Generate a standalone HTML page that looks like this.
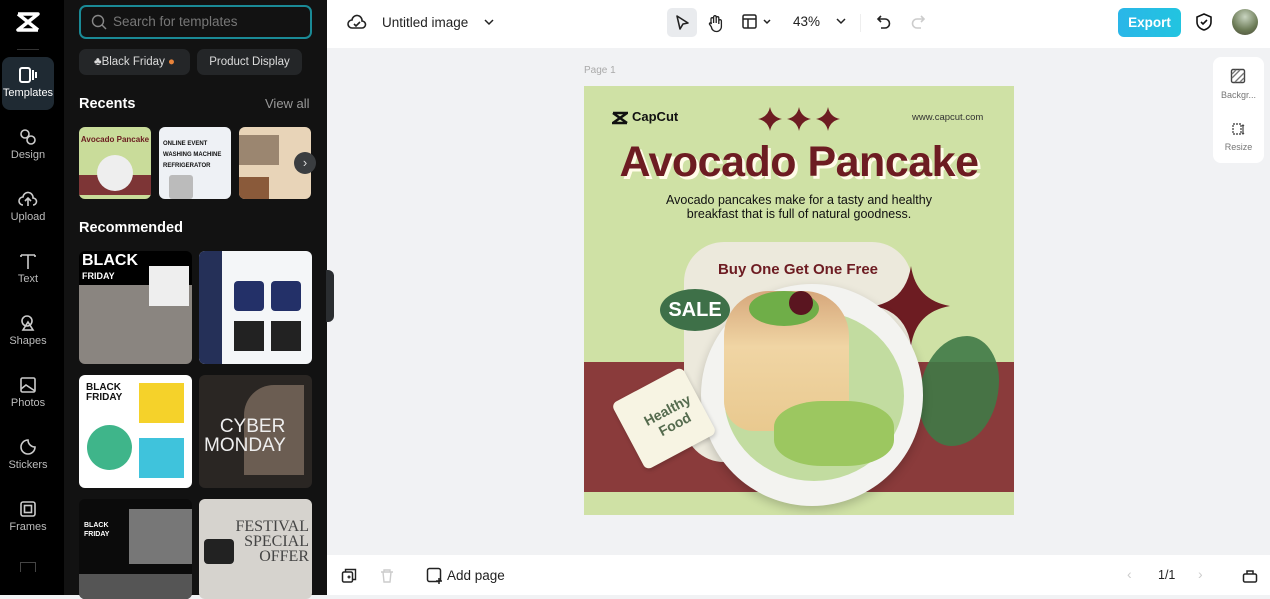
<!DOCTYPE html>
<html><head><meta charset="utf-8"><style>
*{box-sizing:border-box;margin:0;padding:0}
body{width:1270px;height:595px;overflow:hidden;font-family:"Liberation Sans",sans-serif;background:#f1f2f4;position:relative}
.abs{position:absolute}
#rail{left:0;top:0;width:64px;height:595px;background:#000}
.ri{position:absolute;left:0;width:56px;text-align:center;color:#bbb;font-size:11px}
.ri svg{display:block;margin:0 auto 3px}
#panel{left:64px;top:0;width:263px;height:595px;background:#121212}
.th{position:absolute;border-radius:6px;overflow:hidden}
#top{left:327px;top:0;width:943px;height:48px;background:#fff}
#bot{left:327px;top:555px;width:943px;height:40px;background:#fff}
</style></head><body>
<div id="rail" class="abs">
 <svg class="abs" style="left:16px;top:11px" width="24" height="22" viewBox="0 0 24 22"><path d="M2 3h20L2 19h20M2 3l20 16" stroke="#fff" stroke-width="3.5" fill="none" stroke-linejoin="round"/></svg>
 <div class="abs" style="left:17px;top:49px;width:22px;height:1px;background:#333"></div>
 <div class="abs" style="left:2px;top:57px;width:52px;height:53px;border-radius:8px;background:#1f2a33"></div>
 <div class="ri" style="top:66px;color:#fff"><svg width="20" height="18"><rect x="2" y="2" width="10" height="14" rx="2" stroke="#fff" stroke-width="2" fill="none"/><path d="M15 4v10M18 6v6" stroke="#fff" stroke-width="2"/></svg>Templates</div>
 <div class="ri" style="top:128px"><svg width="20" height="18"><circle cx="7" cy="6" r="4" stroke="#ccc" stroke-width="1.6" fill="none"/><circle cx="13" cy="12" r="4" stroke="#ccc" stroke-width="1.6" fill="none"/></svg>Design</div>
 <div class="ri" style="top:190px"><svg width="20" height="18"><path d="M5 15a4 4 0 0 1 0-8 5 5 0 0 1 10 1 3.5 3.5 0 0 1 0 7M10 16V9M7 11l3-3 3 3" stroke="#ccc" stroke-width="1.6" fill="none"/></svg>Upload</div>
 <div class="ri" style="top:252px"><svg width="20" height="18"><path d="M3 3h14M10 3v14M3 3v2M17 3v2" stroke="#ccc" stroke-width="1.6" fill="none"/></svg>Text</div>
 <div class="ri" style="top:314px"><svg width="20" height="18"><circle cx="9" cy="7" r="5" stroke="#ccc" stroke-width="1.6" fill="none"/><path d="M10 8l5 8H5z" stroke="#ccc" stroke-width="1.6" fill="none"/></svg>Shapes</div>
 <div class="ri" style="top:376px"><svg width="20" height="18"><rect x="3" y="2" width="14" height="14" rx="1.5" stroke="#ccc" stroke-width="1.6" fill="none"/><path d="M3 13l5-4 9 6" stroke="#ccc" stroke-width="1.6" fill="none"/></svg>Photos</div>
 <div class="ri" style="top:438px"><svg width="20" height="18"><path d="M10 2a7 7 0 1 0 7 7 7 7 0 0 1-7-7z" stroke="#ccc" stroke-width="1.6" fill="none"/></svg>Stickers</div>
 <div class="ri" style="top:500px"><svg width="20" height="18"><rect x="3" y="2" width="14" height="14" rx="2" stroke="#ccc" stroke-width="1.6" fill="none"/><rect x="6.5" y="5.5" width="7" height="7" stroke="#ccc" stroke-width="1.6" fill="none"/></svg>Frames</div>
 <div class="abs" style="left:20px;top:562px;width:16px;height:10px;border:1.5px solid #444;border-bottom:none"></div>
</div>
<div id="panel" class="abs">
 <div class="abs" style="left:15px;top:5px;width:233px;height:34px;border:2px solid #1a8a96;border-radius:7px"></div>
 <svg class="abs" style="left:27px;top:14px" width="16" height="16"><circle cx="7" cy="7" r="5.5" stroke="#888" stroke-width="1.4" fill="none"/><path d="M11 11l4 4" stroke="#888" stroke-width="1.4"/></svg>
 <div class="abs" style="left:49px;top:14px;color:#777;font-size:13.5px">Search for templates</div>
 <div class="abs" style="left:15px;top:49px;width:111px;height:26px;border-radius:7px;background:#242628;color:#ddd;font-size:11.5px;line-height:26px;text-align:center">♣Black Friday <span style="color:#e8833a">●</span></div>
 <div class="abs" style="left:133px;top:49px;width:105px;height:26px;border-radius:7px;background:#242628;color:#ddd;font-size:11.5px;line-height:26px;text-align:center">Product Display</div>
 <div class="abs" style="left:15px;top:96px;color:#fff;font-size:14.5px;font-weight:bold">Recents</div>
 <div class="abs" style="left:201px;top:96px;color:#999;font-size:13px">View all</div>
 <div class="th" style="left:15px;top:127px;width:72px;height:72px;background:#c9dc9a"><div style="position:absolute;top:48px;height:20px;width:100%;background:#7d3536"></div><div style="position:absolute;left:18px;top:28px;width:36px;height:36px;border-radius:50%;background:#eee"></div><div style="position:absolute;top:8px;width:100%;text-align:center;color:#6b1c20;font-size:8px;font-weight:bold">Avocado Pancake</div></div>
 <div class="th" style="left:95px;top:127px;width:72px;height:72px;background:#eef1f5"><div style="font-size:6px;font-weight:bold;color:#111;padding:12px 4px;line-height:11px">ONLINE EVENT<br>WASHING MACHINE<br>REFRIGERATOR</div><div style="position:absolute;left:10px;top:48px;width:24px;height:24px;background:#bbb;border-radius:3px"></div></div>
 <div class="th" style="left:175px;top:127px;width:72px;height:72px;background:#e8d4b8"><div style="position:absolute;left:0;top:8px;width:40px;height:30px;background:#9b8670"></div><div style="position:absolute;left:0;top:50px;width:30px;height:22px;background:#8a5a3a"></div></div>
 <div class="abs" style="left:230px;top:152px;width:22px;height:22px;border-radius:50%;background:#3a3d40;color:#ddd;font-size:13px;text-align:center;line-height:21px">›</div>
 <div class="abs" style="left:15px;top:220px;color:#fff;font-size:14.5px;font-weight:bold">Recommended</div>
 <div class="th" style="left:15px;top:251px;width:113px;height:113px;background:linear-gradient(#000 0 30%,#8a8580 30%)"><div style="color:#fff;font-weight:bold;font-size:16px;padding:3px 3px;line-height:14px">BLACK<br><span style="font-size:9px">FRIDAY</span></div><div style="position:absolute;left:70px;top:15px;width:40px;height:40px;background:#eee"></div></div>
 <div class="th" style="left:135px;top:251px;width:113px;height:113px;background:#f4f6f8"><div style="position:absolute;left:0;top:0;width:23px;height:113px;background:#253058"></div><div style="position:absolute;left:35px;top:30px;width:30px;height:30px;background:#233068;border-radius:4px"></div><div style="position:absolute;left:72px;top:30px;width:30px;height:30px;background:#233068;border-radius:4px"></div><div style="position:absolute;left:35px;top:70px;width:30px;height:30px;background:#222"></div><div style="position:absolute;left:72px;top:70px;width:30px;height:30px;background:#222"></div></div>
 <div class="th" style="left:15px;top:375px;width:113px;height:113px;background:#fff"><div style="font-size:10px;font-weight:bold;color:#111;padding:8px 7px;line-height:10px">BLACK<br>FRIDAY</div><div style="position:absolute;left:60px;top:8px;width:45px;height:40px;background:#f5d22a"></div><div style="position:absolute;left:8px;top:50px;width:45px;height:45px;border-radius:50%;background:#3fb58a"></div><div style="position:absolute;left:60px;top:63px;width:45px;height:40px;background:#3fc3dc"></div></div>
 <div class="th" style="left:135px;top:375px;width:113px;height:113px;background:#2a2623"><div style="position:absolute;left:45px;top:10px;width:60px;height:90px;background:#6b5d52;border-radius:30px 0 0 0"></div><div style="position:absolute;left:5px;top:42px;color:#eee;font-size:19px;line-height:19px">&nbsp;&nbsp;&nbsp;CYBER<br>MONDAY</div></div>
 <div class="th" style="left:15px;top:499px;width:113px;height:100px;background:#0b0b0b"><div style="position:absolute;left:50px;top:10px;width:63px;height:55px;background:#777"></div><div style="position:absolute;left:0;top:75px;width:113px;height:30px;background:#555"></div><div style="font-size:7px;font-weight:bold;color:#fff;padding:22px 5px;line-height:9px">BLACK<br>FRIDAY</div></div>
 <div class="th" style="left:135px;top:499px;width:113px;height:100px;background:#d6d3ce"><div style="position:absolute;left:35px;top:20px;color:#444;font-family:'Liberation Serif',serif;font-size:16px;line-height:15px;text-align:right;width:75px">FESTIVAL SPECIAL OFFER</div><div style="position:absolute;left:5px;top:40px;width:30px;height:25px;background:#222;border-radius:4px"></div></div>
</div>
<div class="abs" style="left:326px;top:270px;width:8px;height:52px;background:#2a2d30;border-radius:0 6px 6px 0"></div>
<div id="top" class="abs">
 <svg class="abs" style="left:20px;top:13px" width="20" height="18"><path d="M5 15a4 4 0 0 1 0-8 5 5 0 0 1 10 1 3.5 3.5 0 0 1 0 7z M7 11l2 2 4-4" stroke="#222" stroke-width="1.6" fill="none"/></svg>
 <div class="abs" style="left:55px;top:15px;font-size:13.5px;color:#222">Untitled image</div>
 <svg class="abs" style="left:156px;top:18px" width="12" height="8"><path d="M2 2l4 4 4-4" stroke="#222" stroke-width="1.5" fill="none"/></svg>
 <div class="abs" style="left:340px;top:8px;width:30px;height:29px;border-radius:5px;background:#e9ebee"></div>
 <svg class="abs" style="left:347px;top:14px" width="16" height="18"><path d="M3 2l11 7-5 1-3 5z" stroke="#222" stroke-width="1.6" fill="none" stroke-linejoin="round"/></svg>
 <svg class="abs" style="left:379px;top:13px" width="18" height="20"><path d="M5 11V6a1.3 1.3 0 0 1 2.6 0v4V4a1.3 1.3 0 0 1 2.6 0v6V5a1.3 1.3 0 0 1 2.6 0v6V8a1.3 1.3 0 0 1 2.6 0v5a5 5 0 0 1-10 1l-2-3a1.2 1.2 0 0 1 2-1z" stroke="#222" stroke-width="1.3" fill="none"/></svg>
 <svg class="abs" style="left:415px;top:14px" width="32" height="16"><rect x="1" y="1" width="13" height="13" rx="1.5" stroke="#222" stroke-width="1.5" fill="none"/><path d="M1 5h13M6 5v9M22 6l3 3 3-3" stroke="#222" stroke-width="1.5" fill="none"/></svg>
 <div class="abs" style="left:466px;top:14px;font-size:13.5px;color:#222">43%</div>
 <svg class="abs" style="left:508px;top:17px" width="12" height="8"><path d="M2 2l4 4 4-4" stroke="#222" stroke-width="1.5" fill="none"/></svg>
 <div class="abs" style="left:533px;top:14px;width:1px;height:18px;background:#eee"></div>
 <svg class="abs" style="left:549px;top:13px" width="16" height="18"><path d="M5 3L2 6l3 3M2 6h7a4.5 4.5 0 0 1 0 9H5" stroke="#222" stroke-width="1.6" fill="none"/></svg>
 <svg class="abs" style="left:583px;top:13px" width="16" height="18"><path d="M11 3l3 3-3 3M14 6H7a4.5 4.5 0 0 0 0 9h4" stroke="#ccc" stroke-width="1.6" fill="none"/></svg>
 <div class="abs" style="left:791px;top:8px;width:63px;height:29px;border-radius:6px;background:linear-gradient(90deg,#2ab6e8,#22c4e0);color:#fff;font-weight:bold;font-size:13.5px;text-align:center;line-height:29px">Export</div>
 <svg class="abs" style="left:868px;top:12px" width="18" height="20"><path d="M9 2l7 3v5c0 4-3 7-7 8-4-1-7-4-7-8V5z M6 10l2 2 4-4" stroke="#111" stroke-width="1.6" fill="none"/></svg>
 <div class="abs" style="left:905px;top:9px;width:26px;height:26px;border-radius:50%;background:radial-gradient(circle at 50% 30%,#c8d4c0,#6b7a55 60%,#4a4a3a)"></div>
</div>
<div class="abs" style="left:1213px;top:57px;width:51px;height:106px;background:#fff;border-radius:8px"></div>
<svg class="abs" style="left:1230px;top:68px" width="16" height="16"><rect x="1.5" y="1.5" width="13" height="13" rx="1.5" stroke="#444" stroke-width="1.4" fill="none"/><path d="M2 10l8-8M5 14l9-9M2 6l4-4M10 14l4-4" stroke="#777" stroke-width="1.3"/></svg>
<div class="abs" style="left:1213px;top:90px;width:51px;text-align:center;font-size:9px;color:#777">Backgr...</div>
<svg class="abs" style="left:1230px;top:121px" width="16" height="16"><path d="M3 3h8v10H3z" stroke="#555" stroke-width="1.4" fill="none" stroke-dasharray="2 1"/><path d="M13 4v9M12 5l1-1 1 1M12 12l1 1 1-1" stroke="#444" stroke-width="1.2" fill="none"/></svg>
<div class="abs" style="left:1213px;top:142px;width:51px;text-align:center;font-size:9px;color:#777">Resize</div>
<div class="abs" style="left:584px;top:65px;font-size:10px;color:#aaa">Page 1</div>
<!-- canvas -->
<div class="abs" style="left:584px;top:86px;width:430px;height:429px;background:#cfe1a5;overflow:hidden">
 <div class="abs" style="left:0;top:276px;width:430px;height:130px;background:#8a3b3b"></div>
 <svg class="abs" style="left:28px;top:25px" width="16" height="14"><path d="M1 2h14L1 12h14M1 2l14 10" stroke="#111" stroke-width="2.6" fill="none"/></svg>
 <div class="abs" style="left:48px;top:23px;font-size:13px;font-weight:bold;color:#111">CapCut</div>
 <div class="abs" style="left:328px;top:26px;font-size:9.5px;color:#333">www.capcut.com</div>
 <svg class="abs" style="left:172px;top:19px" width="90" height="28"><g fill="#6d1c22"><path d="M14 2Q16 12 26 14Q16 16 14 26Q12 16 2 14Q12 12 14 2z"/><path d="M43 2Q45 12 55 14Q45 16 43 26Q41 16 31 14Q41 12 43 2z"/><path d="M72 2Q74 12 84 14Q74 16 72 26Q70 16 60 14Q70 12 72 2z"/></g></svg>
 <div class="abs" style="left:0;top:52px;width:430px;text-align:center;font-size:43px;font-weight:bold;color:#6d1c22;text-shadow:3px 3px 0 #fffbe8;letter-spacing:-0.5px">Avocado Pancake</div>
 <div class="abs" style="left:0;top:107px;width:430px;text-align:center;font-size:12.5px;color:#111;line-height:14px">Avocado pancakes make for a tasty and healthy<br>breakfast that is full of natural goodness.</div>
 <div class="abs" style="left:100px;top:156px;width:228px;height:220px;background:#ece9dc;border-radius:40px"></div>
 <div class="abs" style="left:100px;top:175px;width:228px;text-align:center;font-size:15px;font-weight:bold;color:#6d1c22">Buy One Get One Free</div>
 <svg class="abs" style="left:290px;top:180px" width="80" height="80"><path d="M37 0Q42 34 76 40Q42 46 37 80Q32 46 0 40Q32 34 37 0z" fill="#6d1c22"/></svg>
 <div class="abs" style="left:335px;top:250px;width:80px;height:110px;background:#3f7a47;border-radius:60% 40% 60% 40%;opacity:.9"></div>
 <div class="abs" style="left:117px;top:198px;width:222px;height:222px;border-radius:50%;background:#f3f3f0;box-shadow:0 4px 10px rgba(0,0,0,.2)"></div>
 <div class="abs" style="left:140px;top:225px;width:180px;height:170px;border-radius:50%;background:#c2dca0"></div>
 <div class="abs" style="left:140px;top:205px;width:125px;height:140px;border-radius:45px 45px 30px 30px;background:linear-gradient(#d6a77b,#f0d5a4 40%,#e9c98f)"></div>
 <div class="abs" style="left:165px;top:205px;width:70px;height:35px;border-radius:50%;background:#6fae48"></div>
 <div class="abs" style="left:205px;top:205px;width:24px;height:24px;border-radius:50%;background:#5a1520"></div>
 <div class="abs" style="left:190px;top:315px;width:120px;height:65px;border-radius:40%;background:#9cc760"></div>
 <div class="abs" style="left:76px;top:203px;width:70px;height:42px;border-radius:50%;background:#3e7048;color:#fff;font-weight:bold;font-size:20px;text-align:center;line-height:42px">SALE</div>
 <div class="abs" style="left:40px;top:295px;width:80px;height:75px;background:#f7f4e3;transform:rotate(-28deg);border-radius:6px;box-shadow:0 2px 4px rgba(0,0,0,.2)"></div>
 <div class="abs" style="left:52px;top:315px;width:70px;text-align:center;transform:rotate(-28deg);font-size:14px;font-weight:bold;color:#556b4e;line-height:16px">Healthy<br>Food</div>
</div>
<div id="bot" class="abs">
 <svg class="abs" style="left:14px;top:13px" width="16" height="16"><rect x="1.5" y="4" width="10" height="10" rx="1.5" stroke="#222" stroke-width="1.5" fill="none"/><path d="M4.5 4V1.5h10v10H12M6.5 9h3M8 7.5v3" stroke="#222" stroke-width="1.4" fill="none"/></svg>
 <svg class="abs" style="left:52px;top:13px" width="16" height="16"><path d="M2 4h12M5 4V2h6v2M4 4l1 10h6l1-10" stroke="#ccc" stroke-width="1.4" fill="none"/></svg>
 <svg class="abs" style="left:99px;top:12px" width="18" height="18"><rect x="1.5" y="1.5" width="13" height="13" rx="2" stroke="#222" stroke-width="1.5" fill="none"/><path d="M13 11v6M10 14h6" stroke="#222" stroke-width="1.5"/></svg>
 <div class="abs" style="left:120px;top:13px;font-size:13.5px;color:#222">Add page</div>
 <div class="abs" style="left:800px;top:11px;font-size:14px;color:#ccc">‹</div>
 <div class="abs" style="left:831px;top:13px;font-size:12.5px;color:#222">1/1</div>
 <div class="abs" style="left:871px;top:11px;font-size:14px;color:#ccc">›</div>
 <svg class="abs" style="left:915px;top:13px" width="16" height="16"><rect x="1.5" y="6" width="13" height="8" rx="1.5" stroke="#222" stroke-width="1.5" fill="none"/><path d="M5 6V3h6v3" stroke="#222" stroke-width="1.5" fill="none"/></svg>
</div>
</body></html>
